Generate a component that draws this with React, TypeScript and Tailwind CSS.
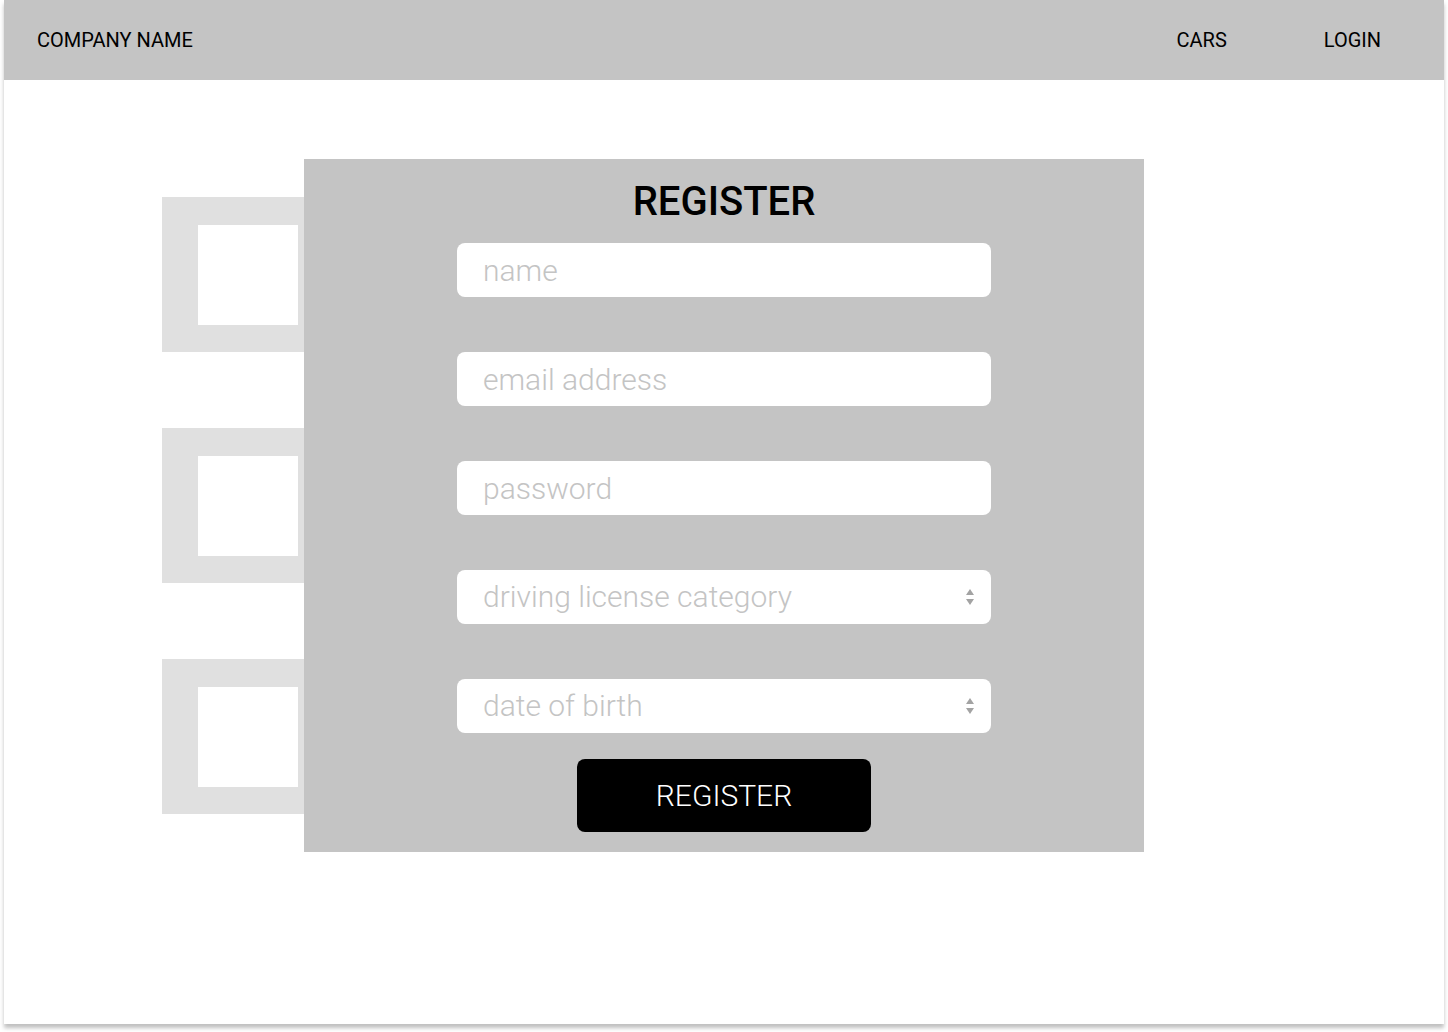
import React from 'react';

function SideBox() {
  return (
    <div className="h-[155px] w-[200px] bg-[#e0e0e0] pl-[36px] pt-[28px]">
      <div className="h-[100px] w-[100px] bg-white" />
    </div>
  );
}

function Arrows() {
  return (
    <svg width="10" height="18" viewBox="0 0 10 18" className="shrink-0">
      <path d="M5 1 L9 7 H1 Z" fill="#a3a3a3" />
      <path d="M5 17 L9 11 H1 Z" fill="#a3a3a3" />
    </svg>
  );
}

function Field({ placeholder, select }: { placeholder: string; select?: boolean }) {
  if (select) {
    return (
      <div className="flex h-[54px] w-[534px] items-center justify-between rounded-[8px] bg-white pl-[26px] pr-[16px]">
        <span className="text-[30px] font-light leading-none text-[#c4c4c4]">{placeholder}</span>
        <Arrows />
      </div>
    );
  }
  return (
    <input
      placeholder={placeholder}
      className="h-[54px] w-[534px] rounded-[8px] bg-white px-[26px] text-[30px] font-light outline-none placeholder:text-[#c4c4c4]"
    />
  );
}

export default function App() {
  return (
    <div className="h-[1032px] w-[1448px] overflow-hidden bg-white font-['Roboto',sans-serif]">
      <div className="ml-[4px] h-[1024px] w-[1440px] bg-white shadow-[0_4px_4px_rgba(0,0,0,0.25)]">
        <header className="flex h-[80px] items-center bg-[#c4c4c4] pl-[33px] pr-[63px] text-[20px] text-black">
          <span>COMPANY NAME</span>
          <nav className="ml-auto flex gap-[97px]">
            <a>CARS</a>
            <a>LOGIN</a>
          </nav>
        </header>

        <main className="relative">
          <div className="flex flex-col gap-[76px] pl-[158px] pt-[117px]">
            <SideBox />
            <SideBox />
            <SideBox />
          </div>

          <div className="absolute left-[300px] top-[79px] flex w-[840px] flex-col items-center bg-[#c4c4c4] pb-[20px] pt-[23px]">
            <h1 className="text-[40px] font-medium leading-none text-black">REGISTER</h1>
            <form className="mt-[21px] flex flex-col gap-[55px]">
              <Field placeholder="name" />
              <Field placeholder="email address" />
              <Field placeholder="password" />
              <Field placeholder="driving license category" select />
              <Field placeholder="date of birth" select />
            </form>
            <button
              type="button"
              className="mt-[26px] h-[73px] w-[294px] rounded-[8px] bg-black text-[30px] font-light text-white"
            >
              REGISTER
            </button>
          </div>
        </main>
      </div>
    </div>
  );
}
